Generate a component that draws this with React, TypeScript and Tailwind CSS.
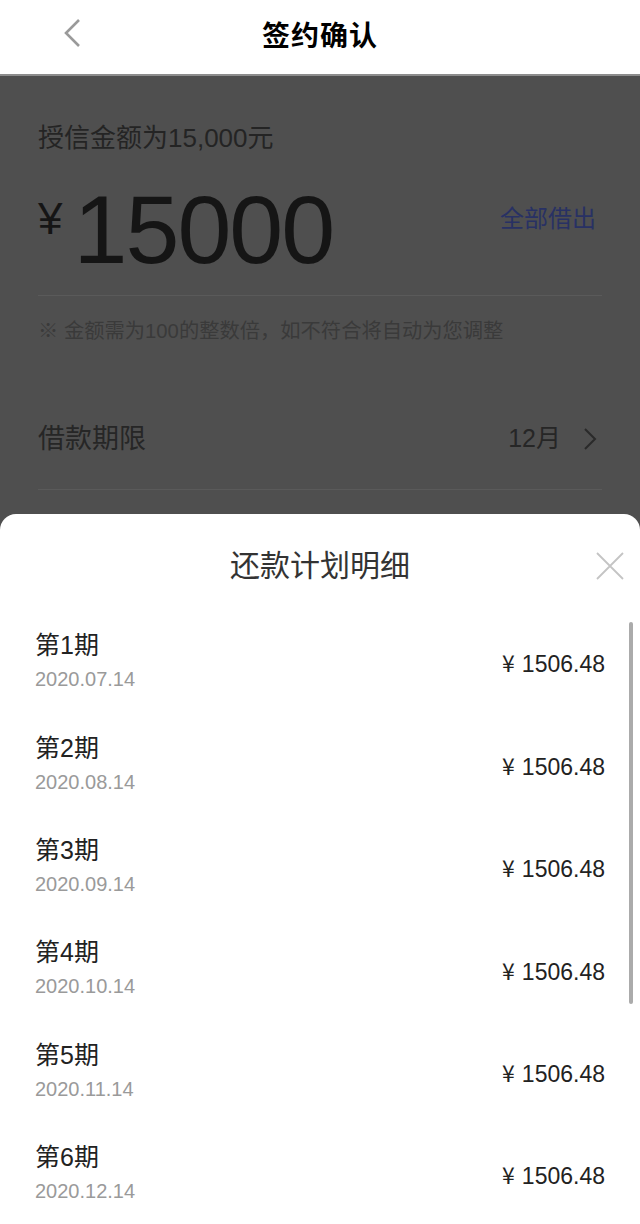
import React from "react"

const plan = [
  { no: 1, date: "2020.07.14" },
  { no: 2, date: "2020.08.14" },
  { no: 3, date: "2020.09.14" },
  { no: 4, date: "2020.10.14" },
  { no: 5, date: "2020.11.14" },
  { no: 6, date: "2020.12.14" },
]

export default function App() {
  return (
    <div className="relative w-[640px] h-[1224px] overflow-hidden bg-[#4f4f4f] font-['Liberation_Sans','Noto_Sans_CJK_SC',sans-serif]">
      {/* Header */}
      <div className="h-[76px] bg-white border-b-2 border-[#8c8c8c] flex items-center justify-center relative">
        <svg className="absolute left-[60px] top-[17px]" width="24" height="32" viewBox="0 0 24 32">
          <path d="M19 3 L6 16 L19 29" fill="none" stroke="#9a9a9a" strokeWidth="2.6" />
        </svg>
        <h1 className="text-[28px] font-bold text-black tracking-[1px]">签约确认</h1>
      </div>

      {/* Page content (dimmed) */}
      <div className="px-[38px] pt-[44px]">
        <p className="text-[26px] leading-[36px] text-[#242424]">授信金额为15,000元</p>
        <div className="flex items-start justify-between mt-[24px] h-[100px]">
          <div className="flex items-start">
            <span className="text-[44px] leading-[44px] text-[#151515] mt-[17px]">¥</span>
            <span className="text-[97px] leading-[100px] text-[#151515] ml-[11px] tracking-[-2px]">15000</span>
          </div>
          <span className="text-[24px] leading-[34px] text-[#283164] mt-[22px] mr-[6px]">全部借出</span>
        </div>
        <div className="h-px bg-[#5a5a5a] mt-[15px]" />
        <p className="text-[20.3px] leading-[30px] text-[#3a3a3a] mt-[20px]">※ 金额需为100的整数倍，如不符合将自动为您调整</p>
        <div className="flex items-center justify-between h-[80px] mt-[53px]">
          <span className="text-[27px] text-[#262626]">借款期限</span>
          <div className="flex items-center gap-[22px]">
            <span className="text-[25px] text-[#262626]">12月</span>
            <svg width="14" height="24" viewBox="0 0 14 24" className="mr-[5px]">
              <path d="M2 2 L12 12 L2 22" fill="none" stroke="#2a2a2a" strokeWidth="2" />
            </svg>
          </div>
        </div>
        <div className="h-px bg-[#5a5a5a] mt-[10px]" />
      </div>

      {/* Bottom sheet */}
      <div className="absolute left-0 right-0 top-[514px] bottom-0 bg-white rounded-t-[16px]">
        <div className="h-[97px] pt-[32px] relative">
          <h2 className="text-center text-[30px] leading-[40px] text-[#333]">还款计划明细</h2>
          <svg className="absolute right-[16px] top-[38px]" width="28" height="28" viewBox="0 0 28 28">
            <path d="M1 1 L27 27 M27 1 L1 27" stroke="#c4c4c4" strokeWidth="1.8" />
          </svg>
        </div>
        <div>
          {plan.map((p) => (
            <div key={p.no} className="h-[102.4px] flex items-center justify-between pl-[35px] pr-[35px]">
              <div>
                <p className="text-[25px] leading-[34px] text-[#222]">第{p.no}期</p>
                <p className="text-[20px] leading-[34px] text-[#9a9a9a]">{p.date}</p>
              </div>
              <span className="text-[23px] text-[#222] mt-[3px]">
                <span className="font-['Noto_Sans_CJK_SC',sans-serif] mr-[7px]">¥</span>1506.48
              </span>
            </div>
          ))}
        </div>
        <div className="absolute right-[7px] top-[108px] w-[4px] h-[382px] rounded-full bg-[#ababab]" />
      </div>
    </div>
  )
}
